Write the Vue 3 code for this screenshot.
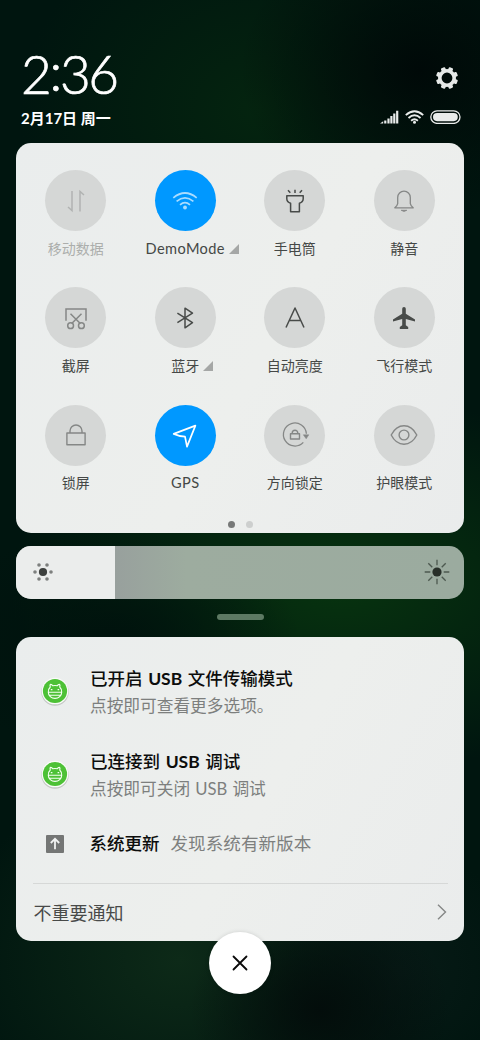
<script setup>
const tiles = [
  { id: 'data', label: '移动数据', state: 'disabled' },
  { id: 'wifi', label: 'DemoMode', state: 'active', more: true, latin: true },
  { id: 'torch', label: '手电筒', state: 'dark' },
  { id: 'bell', label: '静音', state: 'normal' },
  { id: 'shot', label: '截屏', state: 'normal' },
  { id: 'bluetooth', label: '蓝牙', state: 'dark', more: true },
  { id: 'auto', label: '自动亮度', state: 'dark' },
  { id: 'plane', label: '飞行模式', state: 'dark' },
  { id: 'lock', label: '锁屏', state: 'normal' },
  { id: 'gps', label: 'GPS', state: 'active', latin: true },
  { id: 'rotate', label: '方向锁定', state: 'normal' },
  { id: 'eye', label: '护眼模式', state: 'normal' },
]
const notices = [
  { pre: '已开启', post: '文件传输模式', sub: '点按即可查看更多选项。', usb: '' },
  { pre: '已连接到', post: '调试', sub: '点按即可关闭 ', usb: 'USB', tail: ' 调试' },
]
const brightness = 22
const rays = [0, 45, 90, 135, 180, 225, 270, 315]
const teeth = [22.5, 67.5, 112.5, 157.5, 202.5, 247.5, 292.5, 337.5]
</script>

<template>
  <main class="screen">
    <header class="header">
      <div class="when">
        <div class="clock">2<span class="colon">:</span>36</div>
        <div class="date">2月17日 周一</div>
      </div>
      <div class="status">
        <svg class="gear" width="24" height="24" viewBox="-12 -12 24 24">
          <circle r="7.2" fill="none" stroke="#e6e9e8" stroke-width="3.6" />
          <rect v-for="a in teeth" :key="a" x="-2.3" y="-11" width="4.6" height="4" rx="1" fill="#e6e9e8" :transform="`rotate(${a})`" />
        </svg>
        <div class="indicators">
          <svg width="19" height="14" viewBox="0 0 19 14" fill="#e9eceb">
            <path d="M0 13.5L3.2 11.3V13.5ZM4.2 10.6h2.2v2.9H4.2ZM7.4 8.5h2.2v5H7.4ZM10.3 6h2.2v7.5h-2.2ZM13.2 3.4h2.2v10.1h-2.2ZM16.1.8h2.2v12.7h-2.2Z" />
          </svg>
          <svg width="19" height="14" viewBox="0 0 19 14" fill="none" stroke="#e9eceb" stroke-width="1.9">
            <path d="M.8 5.1Q9.5-2.7 18.2 5.1M3.5 8Q9.5 2.7 15.5 8M6.1 10.7Q9.5 7.9 12.9 10.7" />
            <circle cx="9.5" cy="12.2" r="1.5" fill="#e9eceb" stroke="none" />
          </svg>
          <svg width="31" height="14" viewBox="0 0 31 14">
            <rect x=".8" y=".8" width="29.2" height="12.6" rx="6.3" fill="none" stroke="#e9eceb" stroke-width="1.3" />
            <rect x="3" y="3" width="24.8" height="8.2" rx="4.1" fill="#e9eceb" />
          </svg>
        </div>
      </div>
    </header>

    <section class="panel toggles">
      <div class="grid">
        <div v-for="t in tiles" :key="t.id" class="tile" :class="t.state">
          <div class="disc">
            <svg width="30" height="30" viewBox="-15 -15 30 30" fill="none" stroke="currentColor" stroke-width="1.5" stroke-linejoin="round">
              <template v-if="t.id === 'data'">
                <path d="M-4-10V9.5L-8 6M4 10.5V-9.5L8-6" stroke-linejoin="miter" />
              </template>
              <template v-else-if="t.id === 'wifi'">
                <path d="M-11.7-3.2Q0-12.8 11.7-3.2M-8.4.4Q0-6.6 8.4.4M-5 3.8Q0-.5 5 3.8" stroke-width="1.7" />
                <circle cy="6.5" r="1.9" fill="currentColor" stroke="none" />
              </template>
              <template v-else-if="t.id === 'torch'">
                <path d="M-8.2-5.3H8.2V-2.2Q8.2 1 4.4 2.3V10.7H-4.4V2.3Q-8.2 1-8.2-2.2ZM0-11.3V-8M-7-10.8L-4.7-8.2M7-10.8L4.7-8.2" />
              </template>
              <template v-else-if="t.id === 'bell'">
                <path d="M-6.3 2.7V-3.5A6.3 6.3 0 0 1 6.3-3.5V2.7Q6.8 5 9.2 6.8H-9.2Q-6.8 5-6.3 2.7Z" stroke-width="1.3" />
                <path d="M-2.8 9.3H2.8Q0 11.5-2.8 9.3" stroke-width=".8" fill="currentColor" />
              </template>
              <template v-else-if="t.id === 'shot'">
                <path d="M-10 2.7V-9H10V2.7M-5.5-4.2L4.3 5.5M5.5-4.2L-4.3 5.5" stroke-linejoin="miter" />
                <circle cx="-5.4" cy="7.7" r="2.9" /><circle cx="5.4" cy="7.7" r="2.9" />
              </template>
              <template v-else-if="t.id === 'bluetooth'">
                <path d="M-7.6-4.9L7.5 4.7L0 9.8V-9.8L7.5-4.9L-7.6 4.7" stroke-width="1.5" />
              </template>
              <template v-else-if="t.id === 'auto'">
                <path d="M-9 9.5L0-10L9 9.5M-6.1 2.4H6.1" />
              </template>
              <template v-else-if="t.id === 'plane'">
                <path d="M0-11Q1.8-11 1.8-9.2V-4.2L11 1.6V3.5L1.8 1V7.2L4.2 9V10.9H-4.2V9L-1.8 7.2V1L-11 3.5V1.6L-1.8-4.2V-9.2Q-1.8-11 0-11Z" fill="currentColor" stroke="none" />
              </template>
              <template v-else-if="t.id === 'lock'">
                <path d="M-9.1-2H9.1V9.8H-9.1ZM-6-2V-4A6 6 0 0 1 6-4V-2" stroke-width="1.4" />
              </template>
              <template v-else-if="t.id === 'gps'">
                <path d="M10.4-9.4L2 11.6L0 1.7Q-5.4 1.5-11.3-1.1Z" stroke-width="1.7" />
              </template>
              <template v-else-if="t.id === 'rotate'">
                <path d="M11.4-1.2A11.5 11.5 0 1 0 8.3 7.4" stroke-width="1.3" />
                <path d="M8.3-.2H13.8L11.2 3.8Z" fill="currentColor" stroke-width=".5" />
                <path d="M-4.5-1.2H4.5V4H-4.5ZM-2.8-1.2V-2A2.8 2.8 0 0 1 2.8-2V-1.2" stroke-width="1.4" />
              </template>
              <template v-else>
                <path d="M-12.8 0C-6.5-12.3 6.5-12.3 12.8 0C6.5 12.3-6.5 12.3-12.8 0Z" stroke-width="1.4" />
                <circle r="4.9" stroke-width="1.4" />
              </template>
            </svg>
          </div>
          <div class="label" :class="{ latin: t.latin }">
            <span>{{ t.label }}</span>
            <svg v-if="t.more" class="corner" width="10" height="10" viewBox="0 0 10 10"><path d="M0 10L10 0V10Z" fill="#a5a7a6" /></svg>
          </div>
        </div>
      </div>
      <div class="pager"><i class="on"></i><i></i></div>
    </section>

    <section class="slider">
      <div class="level" :style="{ width: brightness + '%' }"></div>
      <div class="slider-icons">
        <svg width="22" height="22" viewBox="-11 -11 22 22">
          <circle r="4.1" fill="#3d403e" />
          <g fill="#7d807e"><circle cx="-8" r="1.8" /><circle cx="8" r="1.8" /><circle cx="-4" cy="-7" r="1.8" /><circle cx="4" cy="-7" r="1.8" /><circle cx="-4" cy="7" r="1.8" /><circle cx="4" cy="7" r="1.8" /></g>
        </svg>
        <svg width="26" height="26" viewBox="-13 -13 26 26">
          <circle r="4.6" fill="#282f29" />
          <path v-for="a in rays" :key="a" d="M0-6.7V-12.3" stroke="#4c584f" stroke-width="1.3" :transform="`rotate(${a})`" />
        </svg>
      </div>
    </section>
    <div class="handle"></div>

    <section class="panel notices">
      <article v-for="n in notices" :key="n.pre" class="notice">
        <svg class="app" width="30" height="30" viewBox="-15 -15 30 30">
          <circle cy="1" r="13.7" fill="#c3c7c4" />
          <circle r="13.3" fill="#fafcf9" />
          <circle r="12.1" fill="#4dc136" />
          <g fill="none" stroke="#f5fff2" stroke-width="1.1" stroke-linejoin="round">
            <path d="M-6.7 1.2A6.7 6.2 0 0 0 6.7 1.2Q6.7-2.2 4.7-4Q5.4-6.3 4.3-6.6Q3-6.6 2.3-5.2Q0-5.8-2.3-5.2Q-3-6.6-4.3-6.6Q-5.4-6.3-4.7-4Q-6.7-2.2-6.7 1.2ZH6.7M-5.6 4.2H5.6" />
            <path d="M-3.4-2V-.7M3.4-2V-.7" stroke-width="1.6" />
          </g>
        </svg>
        <div>
          <h2>{{ n.pre }} <b>USB</b> {{ n.post }}</h2>
          <p>{{ n.sub }}<b v-if="n.usb">{{ n.usb }}</b>{{ n.tail }}</p>
        </div>
      </article>
      <article class="update">
        <svg class="up" width="18" height="18" viewBox="0 0 18 18">
          <rect width="18" height="18" rx="1" fill="#747675" />
          <path d="M9 14.3V4.2M4.8 8L9 3.8L13.2 8" fill="none" stroke="#f1f3f2" stroke-width="1.8" />
        </svg>
        <h2>系统更新</h2>
        <p>发现系统有新版本</p>
      </article>
      <footer class="minor">
        <span>不重要通知</span>
        <svg width="10" height="16" viewBox="0 0 10 16"><path d="M1 .8L8.5 8L1 15.2" fill="none" stroke="#858786" stroke-width="1.4" /></svg>
      </footer>
    </section>
    <button class="close" aria-label="关闭">
      <svg width="16" height="16" viewBox="0 0 16 16"><path d="M1.5 1.5L14.5 14.5M14.5 1.5L1.5 14.5" stroke="#090909" stroke-width="1.8" stroke-linecap="round" /></svg>
    </button>
  </main>
</template>

<style>
body { background: #00100b; }
</style>

<style scoped>
* { box-sizing: border-box; margin: 0; }
.screen {
  width: 480px;
  height: 1040px;
  padding: 48px 16px 0;
  overflow: hidden;
  font-family: Lato, "Noto Sans CJK SC", sans-serif;
  background:
    radial-gradient(ellipse 130px 110px at 320px 1010px, #030d0b, transparent),
    radial-gradient(ellipse 130px 120px at 400px 970px, #071a16, transparent),
    radial-gradient(ellipse 230px 190px at 180px 960px, #0d2a18, transparent),
    radial-gradient(ellipse 190px 110px at 110px 640px, #00120d, transparent),
    radial-gradient(ellipse 330px 190px at 340px 585px, #07330f, transparent),
    radial-gradient(ellipse 180px 150px at 420px 70px, #000908, transparent),
    radial-gradient(ellipse 240px 200px at 260px 110px, #04240f, transparent),
    #00150f;
}
.header { display: flex; justify-content: space-between; height: 94.5px; padding: 0 3px 0 5px; color: #fff; }
.clock { height: 54px; font-size: 53px; line-height: 52px; font-weight: 300; letter-spacing: -2.3px; -webkit-text-stroke: .7px #fff; }
.colon { position: relative; top: -3px; }
.date { margin-top: 6.5px; font-size: 15px; line-height: 18px; font-weight: 700; white-space: nowrap; }
.status { display: flex; flex-direction: column; align-items: flex-end; padding-top: 18px; }
.gear { margin-right: 2px; }
.indicators { display: flex; gap: 6px; margin-top: 20px; }
.panel { border-radius: 15px; background: linear-gradient(120deg, #eaeded, #edefed 55%, #eaecec); }
.toggles { height: 390.5px; padding: 27.5px 5px 0; }
.grid { display: grid; grid-template-columns: repeat(4, 1fr); grid-auto-rows: 117.3px; }
.tile { display: flex; flex-direction: column; align-items: center; color: #858786; }
.disc { display: grid; place-items: center; width: 61px; height: 61px; border-radius: 50%; background: #d5d7d6; }
.dark { color: #484b49; }
.disabled { color: #b1b3b2; }
.active .disc { background: #0098ff; color: #fff; }
.active:nth-child(2) .disc { color: #a9dcff; }
.label { position: relative; margin-top: 7.5px; font-size: 14px; line-height: 20px; color: #454846; white-space: nowrap; }
.disabled .label { color: #acaeac; }
.latin { font-family: Lato, sans-serif; font-size: 14.6px; letter-spacing: .4px; }
.corner { position: absolute; left: calc(100% + 4px); top: 5px; }
.pager { display: flex; justify-content: center; gap: 11px; margin-top: -1px; }
.pager i { width: 7px; height: 7px; border-radius: 50%; background: #cdcfce; }
.pager .on { background: #777978; }
.slider { position: relative; height: 53.5px; margin-top: 12.5px; overflow: hidden; border-radius: 15px; background: linear-gradient(90deg, #98a09d 22%, #9dac9f 38%, #9bab9f); }
.level { height: 100%; background: #ebedec; }
.slider-icons { position: absolute; inset: 0; display: flex; align-items: center; justify-content: space-between; padding: 0 14px 0 16px; }
.handle { width: 47px; height: 6px; margin: 14.5px auto 0; border-radius: 3px; background: #5d7963; }
.notices { height: 304px; margin-top: 17.5px; padding: 29px 16px 0 17px; }
.notice { display: flex; height: 82.7px; padding-left: 7px; }
.notice .app { margin: 10px 20px 0 0; }
h2 { font-size: 17.5px; line-height: 26px; font-weight: 500; color: #0c0d0c; white-space: nowrap; word-spacing: 1.2px; }
p { font-size: 16.7px; line-height: 28px; color: #7d7f7e; white-space: nowrap; word-spacing: .8px; }
h2 b { font-weight: 700; }
p b { font-weight: 400; }
.update { display: flex; align-items: center; height: 26px; padding-left: 13px; }
.update h2 { margin-left: 25.5px; }
.update p { margin-left: 11px; font-size: 17.6px; line-height: 26px; }
.minor { display: flex; align-items: center; justify-content: space-between; margin-top: 25.5px; padding: 0 1px 0 .5px; border-top: 1px solid #d6d8d7; height: 57px; font-size: 18px; color: #484a49; }
.close { position: relative; display: grid; place-items: center; width: 62px; height: 62px; margin: -9.5px auto 0; padding: 0; border: 0; border-radius: 50%; background: #fff; box-shadow: 0 0 4px #0002; }
</style>
